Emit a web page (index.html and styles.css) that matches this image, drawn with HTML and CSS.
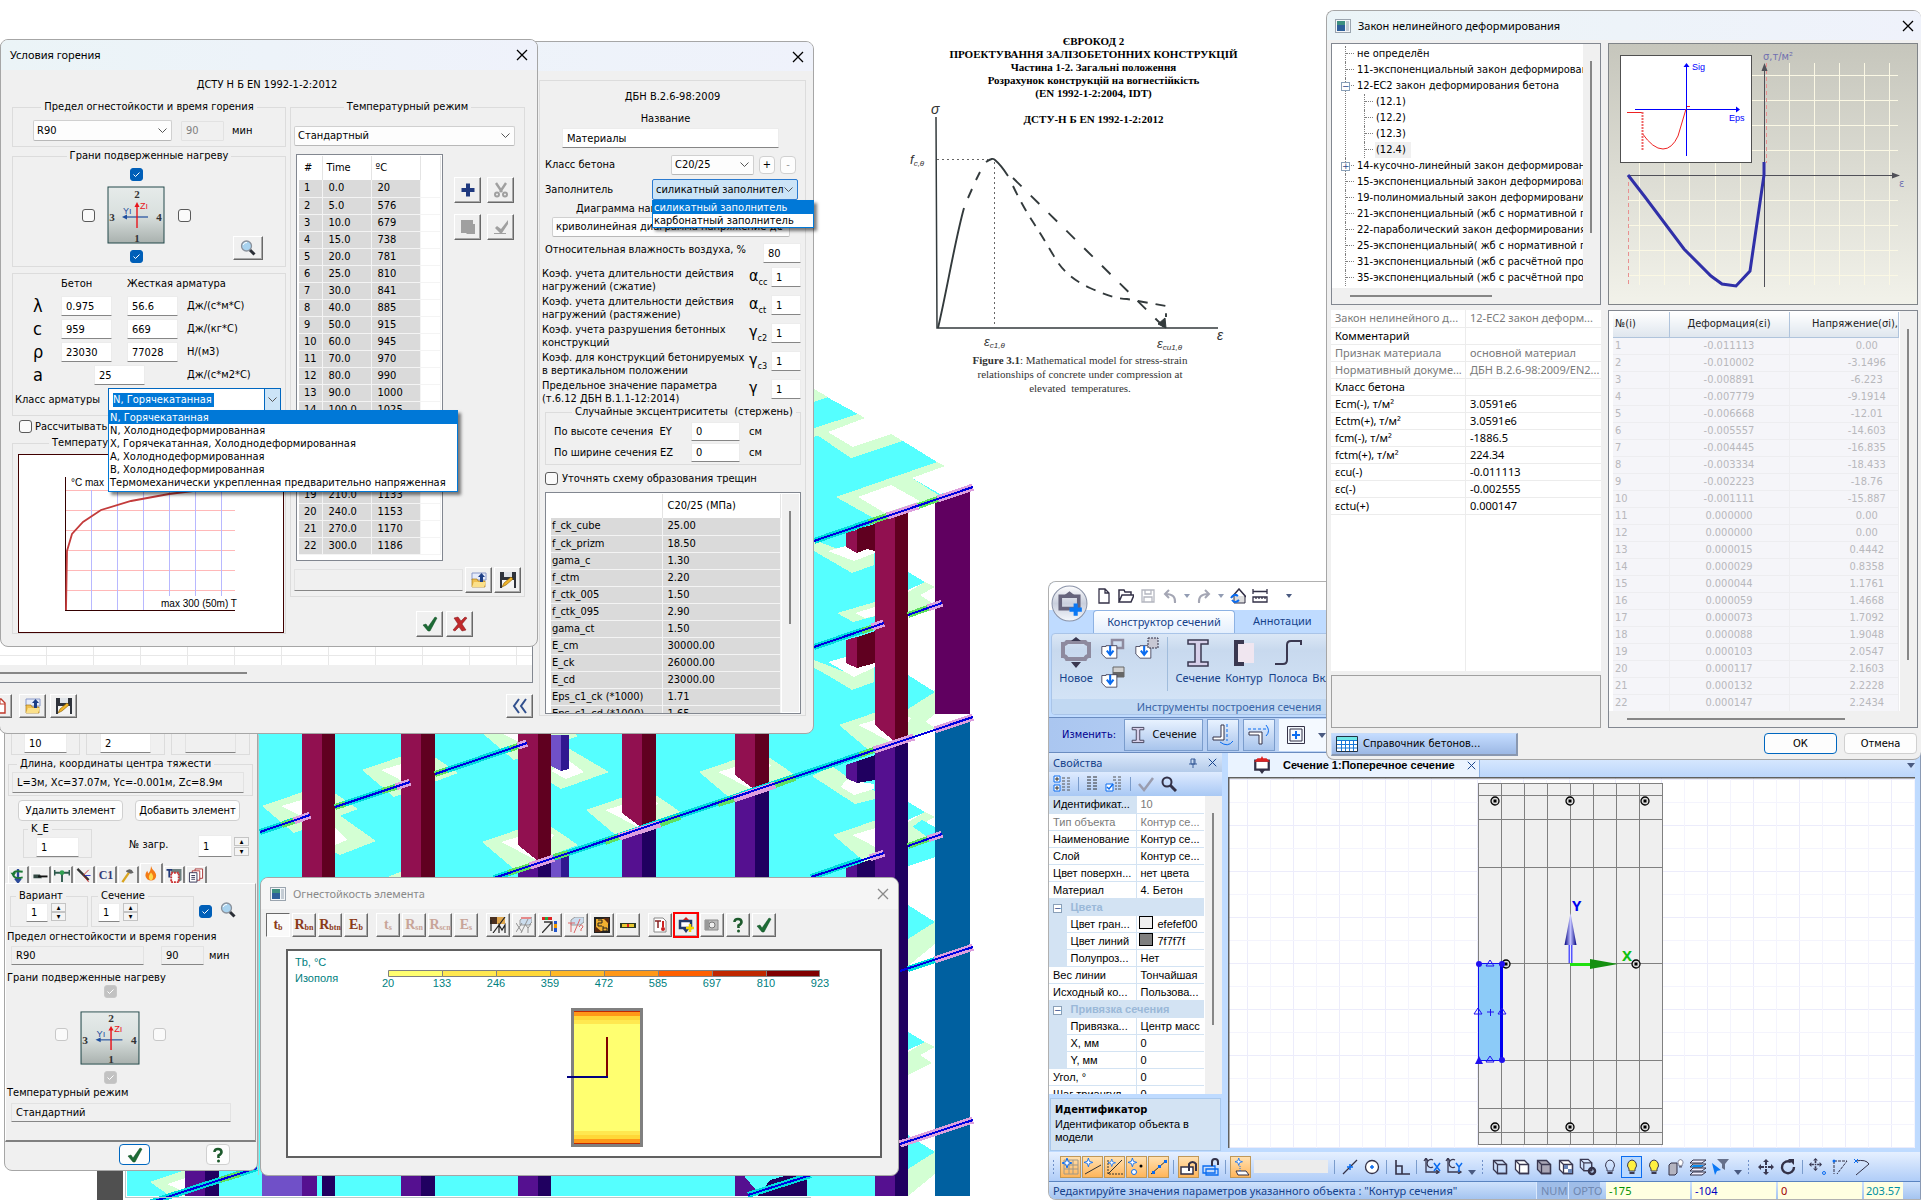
FILE: index.html
```
<!DOCTYPE html>
<html lang="ru">
<head>
<meta charset="utf-8">
<title>Огнестойкость элемента</title>
<link rel="stylesheet" href="styles.css">
</head>
<body>
<svg class="sprite" aria-hidden="true">
<defs>
<linearGradient id="g-face" x1="0" y1="0" x2="0" y2="1"><stop offset="0" stop-color="#e6ebea"/><stop offset=".5" stop-color="#d9e0de"/><stop offset="1" stop-color="#a9b1ae"/></linearGradient>
<linearGradient id="g-plot" x1="0" y1="0" x2="0" y2="1"><stop offset="0" stop-color="#c6c6bc"/><stop offset="1" stop-color="#f2f2ea"/></linearGradient>
<linearGradient id="g-blue" x1="0" x2="1"><stop offset="0" stop-color="#000080"/><stop offset=".5" stop-color="#c0c0ff"/><stop offset="1" stop-color="#000080"/></linearGradient>
<linearGradient id="g-app" x1="0" y1="0" x2="0" y2="1"><stop offset="0" stop-color="#fdfdfe"/><stop offset=".5" stop-color="#c9cfdd"/><stop offset="1" stop-color="#f4f7fc"/></linearGradient>
<pattern id="p-grid" x="1248" y="825" width="46" height="46" patternUnits="userSpaceOnUse"><path d="M.5 0V46M0 .5H46" stroke="#ececfb"/><path d="M23.5 0V46M0 23.5H46" stroke="#f4f4fd"/></pattern>
</defs>
<symbol id="i-close" viewBox="0 0 12 12"><path d="M1 1l10 10M11 1L1 11" fill="none" stroke="currentColor" stroke-width="1.3"/></symbol>
<symbol id="i-app" viewBox="0 0 16 14"><rect x=".5" y=".5" width="15" height="13" fill="#f4f6f8" stroke="#9aa4ae"/><rect x="2" y="2" width="8" height="10" fill="#3c8f80"/><rect x="2" y="6" width="8" height="6" fill="#2d5f9a"/><rect x="11" y="2" width="3" height="10" fill="#c4ccd4"/></symbol>
<symbol id="i-plus" viewBox="0 0 16 16"><path d="M6 1.500h4V6h4.500v4H10v4.500H6V10H1.500V6H6z" fill="#203a80"/></symbol>
<symbol id="i-cut" viewBox="0 0 16 16"><path d="M3 1l6 9M13 1L7 10" stroke="#a0a0a0" stroke-width="2.400"/><g fill="none" stroke="#a0a0a0" stroke-width="2"><circle cx="4" cy="12.500" r="2"/><circle cx="12" cy="12.500" r="2"/></g></symbol>
<symbol id="i-block" viewBox="0 0 16 16"><path d="M1 1h12v4h2v10H7l-1-1H1z" fill="#a0a0a0"/></symbol>
<symbol id="i-tickgray" viewBox="0 0 16 16"><path d="M15 1v4l-6 9H7L2 9l2-2 4 3zM1 14h12v1H1z" fill="#a0a0a0"/></symbol>
<symbol id="i-tick" viewBox="0 0 16 16"><path d="M1 9l3-1 2 3 7-10 2 1-7 13H6z" fill="#1c6b35" stroke="#0d4a20" stroke-width=".5"/></symbol>
<symbol id="i-cross" viewBox="0 0 16 16"><path d="M2 2l4-1 3 4 4-4 2 1-5 6 4 6-4 1-3-4-4 4-2-1 5-6z" fill="#c0292b" stroke="#7c1012" stroke-width=".5"/></symbol>
<symbol id="i-open" viewBox="0 0 16 16"><path d="M1 1h14v7H1z" fill="#e6ecfa" stroke="#8898c8"/><path d="M1 15V7h5l1 2h7v6z" fill="#f0c050" stroke="#a87818" stroke-width=".7"/><path d="M3 10h12l-2 5H1z" fill="#fbe08a"/><path d="M9 10V5H7l3.500-4L14 5h-2v5z" fill="#1d3f87"/></symbol>
<symbol id="i-save" viewBox="0 0 16 16"><path d="M0 0h16v16H0z" fill="#2f333b"/><path d="M4 0h8v5H4z" fill="#dfe3e8"/><path d="M2 8h12v8H2z" fill="#f4f4f4"/><path d="M2 15l2-4 7-6 2 2-7 6z" fill="#f0b429" stroke="#855a00" stroke-width=".6"/></symbol>
<symbol id="i-glass" viewBox="0 0 16 16"><path d="M9.500 9.500l5 5" stroke="#2b2f36" stroke-width="3"/><circle cx="6.500" cy="6" r="5" fill="#a9d3ef" stroke="#8b929c" stroke-width="1.300"/><path d="M3 5q1.500-3 4-2.500" stroke="#fff" fill="none"/></symbol>
<symbol id="i-back" viewBox="0 0 16 16"><path d="M7 1L2 8l5 7M14 1L9 8l5 7" fill="none" stroke="#31508e" stroke-width="2"/></symbol>
<symbol id="i-page" viewBox="0 0 16 16"><path d="M2 1h8l4 4v10H2z" fill="#fff" stroke="#c0392b" stroke-width="1.400"/><path d="M9 1v5h5" fill="none" stroke="#c0392b"/></symbol>
<symbol id="i-help" viewBox="0 0 16 16"><path d="M4.500 5Q4.500 2 8 2t3.500 3Q11.500 7 8.500 8.500V11" fill="none" stroke="#1d5a2c" stroke-width="2.600"/><circle cx="8.500" cy="14" r="1.500" fill="#1d5a2c"/></symbol>
<symbol id="i-face" viewBox="0 0 58 58"><rect x="1" y="1" width="56" height="56" fill="url(#g-face)" stroke="#22494a"/><g font-family="Liberation Serif,serif" font-weight="700" font-size="11" fill="#333" text-anchor="middle"><text x="30" y="12">2</text><text x="5" y="35">3</text><text x="52" y="35">4</text><text x="30" y="56">1</text></g><path d="M41 31H18" stroke="#1f4e9e" stroke-width="1.200"/><path d="M15 31l5-2.500v5z" fill="#1f4e9e"/><path d="M30 42V20" stroke="#e8141c" stroke-width="1.400"/><path d="M30 16l2.500 5h-5z" fill="#e8141c"/><g font-family="Liberation Sans,sans-serif" font-size="9"><text x="16" y="28" fill="#1f4e9e">Yı</text><text x="33" y="23" fill="#e8141c">Zı</text></g></symbol>
<symbol id="i-section" viewBox="0 0 32 32"><path d="M3 7q3 0 4-2h18q1 2 4 2v12q-3 0-4 3H7q-1-3-4-3z" fill="none" stroke="#8e8a9e" stroke-width="4"/><path d="M11 4l5-4 5 4zM11 25l5 6 5-6z" fill="#3a3850"/></symbol>
<symbol id="i-import" viewBox="0 0 24 24"><path d="M1 9h5v-1h13v15H6l-5-5z" fill="#fff" stroke="#3a3850"/><path d="M11 8v9M7 14l4 5 4-5" fill="none" stroke="#0a6cf0" stroke-width="2.500"/></symbol>
<symbol id="i-ibeam" viewBox="0 0 24 30"><path d="M2 2h20v4h-7v18h7v4H2v-4h7V6H2z" fill="#d7d0ea" stroke="#3a3850" stroke-width="1.500"/></symbol>
<symbol id="i-bulb" viewBox="0 0 16 16"><path d="M5 10Q2.500 7 4 4t4-3 4 3-1 6v2H5z" stroke="#3a3850"/><path d="M5.500 13h5v2h-5z" fill="#3a3850"/></symbol>
<symbol id="i-cube" viewBox="0 0 16 16"><path d="M1.500 1.500h9l4 4v9h-9l-4-4z" stroke="#3a3850" stroke-width="1.300"/><path d="M5.500 5.500h9v9h-9zM1.500 1.500l4 4" fill="none" stroke="#3a3850" stroke-width="1.300"/></symbol>
<symbol id="i-star" viewBox="0 0 16 16"><path d="M5 0l1.200 3.800L10 5 6.200 6.200 5 10 3.800 6.200 0 5l3.800-1.200z" fill="#fff" stroke="#0a6cf0"/></symbol>
<symbol id="i-rot" viewBox="0 0 18 16"><path d="M3 0v14h12M1 3l2-3 2 3M13 12l3 2-3 2" fill="none" stroke="#3a3850" stroke-width="1.300"/><path d="M10 2a4 4 0 1 0 0 7" fill="none" stroke="#3a3850" stroke-width="1.300"/></symbol>
<symbol id="i-move" viewBox="0 0 16 16"><path d="M8 0l3 3H5zM8 16l3-3H5zM0 8l3-3v6zM16 8l-3-3v6zM7 7h2v2H7z" fill="#3a3850"/><path d="M8 3v3M8 10v3M3 8h3M10 8h3" stroke="#3a3850" stroke-width="2"/></symbol>
<symbol id="i-node" viewBox="0 0 10 10"><circle cx="5" cy="5" r="4" fill="#ddd" stroke="#000" stroke-width="1.300"/><rect x="3.500" y="3.500" width="3" height="3"/></symbol>
<symbol id="i-hole" viewBox="-70 -50 140 100" overflow="visible"><path d="M-56-19L5-40 40-16-24 8z" fill="#d3ffd3"/><path d="M-37-19L4-31 16-26 0 0z" fill="#fff"/></symbol>
</svg>

<main class="desktop">

<svg class="scene" width="975" height="1200" viewBox="0 0 975 1200" shape-rendering="crispEdges">
<rect x="97" y="1165" width="26" height="35" fill="#505050"/>
<path d="M127 640H814V389L825 396 858 414 937 462 970 480V487L875 522V745L908 735V1196H127z" fill="#5ff"/>
<path d="M814 389l14 8-14 5zM858 414l7 4-37 14 25 15 38-13 12 7-52 17-37-25v-5zM937 462l8 4-33 12 28 18-63 24-41-23z" fill="#d3ffd3"/>
<path d="M865 418l-37 14 25 15 38-13 12 7 34 21 8 4-33 12 28 16 40-10V410zM891 485l-33 12 27 16 35-12z" fill="#fff"/>
<path d="M851 458l52-17 34 21-60 20-41 15-22 8v-70z" fill="#5ff"/>
<path d="M814 430l37 28 52-17-12-7-38 13-25-15-14 5zM937 462l-101 35 41 23 63-24-28-18 33-12z" fill="#d3ffd3"/>
<path d="M891 485l-33 12 27 16 35-12z" fill="#fff"/>
<path d="M814 540l40 15 20-8v18l-22 8-38-22zM814 660l36 14 24-8v16l-22 8-38-23z" fill="#d3ffd3"/>
<path d="M875 602l-38 11 16 9 30-8z" fill="#d3ffd3"/><path d="M875 607l-20 6 10 5 22-4z" fill="#fff"/>
<path d="M828 551l35-10 12 6v6l-21 8zM828 662l35-10 12 6v9l-21 10z" fill="#fff"/>
<g id="edge">
<path d="M908 572l17 10-17 8z" fill="#5ff"/><path d="M925 582l10 5-15 8 12 8-24 12v-23zM915 700l20-10v24l-27 22v-30z" fill="#d3ffd3"/><path d="M908 675l27 17-27 17z" fill="#5ff"/>
</g>
<use href="#edge" y="230"/><use href="#edge" y="460"/>
<path d="M922 820l13 7v30l-27 9v-36z" fill="#5ff"/>
<g>
<use href="#i-hole" x="248" y="775" width="140" height="100"/>
<use href="#i-hole" x="348" y="739" width="140" height="100"/>
<use href="#i-hole" x="468" y="702" width="140" height="100"/>
<use href="#i-hole" x="468" y="811" width="140" height="100"/>
<use href="#i-hole" x="572" y="779" width="140" height="100"/>
<use href="#i-hole" x="685" y="741" width="140" height="100"/>
<use href="#i-hole" x="825" y="694" width="140" height="100"/>
<use href="#i-hole" x="819" y="804" width="140" height="100"/>
</g>
<path d="M568 748l41 24-48 17-34-21 24-33zM335 812l41 29-36 14-37-18zM846 776l29 15v8l-20 5-43-28 20-10zM814 665l35 14 25-8v10l-22 7-38-20zM385 878l15-6 20 6zM150 1182l35-12v26h-15z" fill="#d3ffd3"/>
<path d="M568 760l16 12-18 7-15-8zM335 828l12 12-12 5zM846 780l28 4v5l-20 6-13-8zM167 1184l18-6v14z" fill="#fff"/>
<g fill="#911050"><path d="M302 730h20v150h-20zM401 730h20v150h-20zM518 730h20v131l-20-16zM622 730h20v98l-20-15zM735 730h20v60l-20-15zM875 523l20-7v226l-20-17zM846 533l11-3v23l-11-6zM846 640l11-3v31l-11-5z"/></g>
<g fill="#600020"><path d="M322 730h13v150h-13zM421 730h14v150h-14zM538 730h13v127l-13 5zM642 730h14v93l-14 6zM755 730h14v57l-14 4zM895 516l13-6v228l-13 5zM857 529l18-5v27l-8-2-10 4zM857 637l18-6v32l-18 5z"/></g>
<g fill="#551090"><path d="M518 869l20-7v18h-20zM622 836l20-7v51h-20zM735 797l20-6v89h-20zM875 750l20-7v453h-20zM846 765l11-4v22l-11-5zM846 868l11-4v32h-11zM185 1165h20v31h-20zM262 1165h55v31h-55zM401 1165h20v31h-20zM518 1165h20v31h-20zM735 1165l20 24v7h-20z"/></g>
<g fill="#200060"><path d="M538 862l13-5v23h-13zM642 829l14-5v56h-14zM755 791l14-4v93h-14zM895 743l13-4v457h-13zM857 761l18-6v25l-18 3zM857 864l18-6v22h-18zM205 1165h14v31h-14zM322 1165h13v31h-13zM421 1165h14v31h-14zM538 1165h13v31h-13zM770 1180l37-10v26h-49z"/></g>
<g fill="#7050c8"><path d="M551 735h10v36l-10-5zM551 858h10v22h-10zM262 1165h40v31h-40z"/></g>
<g fill="#301890"><path d="M561 735h8v34l-8 2zM561 855h8v25h-8z"/></g>
<path d="M935 502l35-12v224H935z" fill="#600060"/><path d="M935 731l35-12v477h-35z" fill="#0060a0"/>
<g fill="none" stroke="#00dcdc" stroke-width="6"><path d="M814 541l55-19M814 647l50-17M494 878l401-135M260 832l50-17M335 807l75-25M435 774l92-31M811 877l50-17M127 1210l130-42M748 1195l63-20M908 969l27-9M908 1142l27-9"/></g>
<g fill="none" stroke="#5fe05f" stroke-width="6"><path d="M869 522l18-6M918 506l20-7M862 631l12-4M908 615l20-7M282 825l12-4M335 807l10-3M382 791l14-4M435 774l12-4M510 749l8-3M508 873l22-7M554 857l14-4M605 842l14-5M660 824l20-7M718 804l16-5M775 785l20-7M860 755l14-5M908 846l20-7M220 1180l20-6"/></g>
<g fill="none" stroke="#dda0dd" stroke-width="7"><path d="M887 516l31-10M938 499l35-12M872 627l12-4M928 608l14-5M294 821l16-6M396 787l14-5M518 746l9-3M530 866l24-8M619 837l41-13M734 799l41-14M874 750l40-13M935 730l38-13M870 858l14-5M928 839l14-5M935 960l38-13M900 1144l73-24"/></g>
<g fill="none" stroke="#0000e0" stroke-width="2"><path d="M814 541l159-54M814 647l70-24M908 615l34-12M494 878l479-161M260 832l50-17M335 807l75-25M435 774l92-31M811 877l73-24M908 846l34-12M900 971l73-24M900 1144l73-24M748 1195l63-20M127 1210l130-42"/></g>
<path d="M258 735v440M125.500 1170v27H811" fill="none" stroke="#b8c8c8"/>
</svg>

<article class="doc">
<p class="doc-head">ЄВРОКОД 2<br>ПРОЕКТУВАННЯ ЗАЛІЗОБЕТОННИХ КОНСТРУКЦІЙ<br>Частина 1-2. Загальні положення<br>Розрахунок конструкцій на вогнестійкість<br>(EN 1992-1-2:2004, IDT)<br><br>ДСТУ-Н Б EN 1992-1-2:2012</p>
<figure>
<svg width="340" height="254" viewBox="0 0 340 254" fill="none" stroke="#333a3c">
<path d="M46 17L47 228H328" stroke-width="1.500"/>
<path d="M47 59.500H98M104.500 62V228" stroke-dasharray="2 3" stroke="#666"/>
<path d="M48 228C57 190 65 140 74 108M78 98l4-9M86 80l4-8M96 62q7-5 9-2 6 5 13 16" stroke-width="1.900"/>
<path d="M123 78L275 228" stroke-dasharray="12 13" stroke-width="1.900"/>
<path d="M123 86Q132 105 143 122T165 158 200 188 237 199L276 206V217" stroke-dasharray="10 8" stroke-width="1.900"/>
<path d="M276 228l-8-4 7-6z" fill="#333a3c"/>
<g fill="#333" stroke="none" font-family="Liberation Sans,sans-serif" font-style="italic"><text x="41" y="14" font-size="14">σ</text><text x="20" y="64" font-size="13">f<tspan font-size="8" dy="2">c,θ</tspan></text><text x="94" y="246" font-size="13">ε<tspan font-size="8" dy="2">c1,θ</tspan></text><text x="267" y="248" font-size="13">ε<tspan font-size="8" dy="2">cu1,θ</tspan></text><text x="327" y="240" font-size="14">ε</text></g>
</svg>
<figcaption><b>Figure 3.1</b>: Mathematical model for stress-strain<br>relationships of concrete under compression at<br>elevated&nbsp; temperatures.</figcaption>
</figure>
</article>

<section class="win panel">
<div class="row top-fields">
<div class="frame"><input class="in w43" value="10" aria-label="A"></div><div class="frame f2"><input class="in w51" value="2" aria-label="B"></div><div class="frame f3"><input class="in ro w51" readonly value="" aria-label="C"></div>
</div>
<fieldset class="group len"><legend>Длина, координаты центра тяжести</legend><input class="in ro" readonly value="L=3м, Xc=37.07м, Yc=-0.001м, Zc=8.9м" aria-label="Длина"></fieldset>
<div class="row two"><button class="soft">Удалить элемент</button><button class="soft">Добавить элемент</button></div>
<div class="row ke"><fieldset class="group"><legend>K_E</legend><input class="in w43" value="1" aria-label="K_E"></fieldset><label for="zagr">№ загр.</label><input id="zagr" class="in" value="1"><span class="spin"><button>▴</button><button>▾</button></span></div>
<div class="tabs">
<button><svg viewBox="0 0 16 16"><path d="M8 1v14M5 11l3 4 3-4" stroke="#2b4a9a" stroke-width="2.500" fill="none"/><path d="M13 4Q3 2 3 7t10 3" stroke="#1c7a35" stroke-width="2" fill="none"/><path d="M0 5l6 0-3 4z" fill="#1c7a35"/></svg></button>
<button><svg viewBox="0 0 16 16"><path d="M1 7h7l2 4H1z" fill="#334a44"/><path d="M6 9h10" stroke="#111" stroke-width="2"/></svg></button>
<button><svg viewBox="0 0 16 16"><path d="M0 5h16M8 5v10M0 2v6M16 2v6" stroke="#2d5a4c" stroke-width="2"/><circle cx="8" cy="5" r="2.500" fill="#30a050"/></svg></button>
<button><svg viewBox="0 0 16 16"><path d="M1 1l12 12" stroke="#333" stroke-width="2.500"/><path d="M7 8l6-6M8 9l5 6" stroke="#c33"/><path d="M9 8h6" stroke="#33c"/></svg></button>
<button class="sec">C1</button>
<button><svg viewBox="0 0 16 16"><path d="M2 15L9 5" stroke="#d9a520" stroke-width="2.500"/><path d="M6 3q5-4 8 2l-3 1-5-2z" fill="#666"/></svg></button>
<button class="on"><svg viewBox="0 0 16 16"><path d="M8 0q1 4 4 6 3 4 0 8-4 3-8 0-4-4 0-9l1 3q3-3 3-8z" fill="#f47b16"/><path d="M8 7q4 4 1 8H7q-3-3 1-8z" fill="#ffd84a"/></svg></button>
<button><svg viewBox="0 0 16 16"><path d="M5 1h11v12l-3 2H5z" fill="#6c8080"/><path d="M5 5h8v10H5z" fill="#fff" stroke="#c33" stroke-width="2" stroke-dasharray="2 1"/><path d="M0 2h6M3 2v8" stroke="#223a7a" stroke-width="2"/></svg></button>
<button><svg viewBox="0 0 16 16" fill="#fff"><path d="M7 1h8v10H7z" stroke="#a33"/><path d="M4 3h8v10H4z" stroke="#a33"/><path d="M1 5h8v10H1zM3 8h4M3 10h4M3 12h4" stroke="#335"/></svg></button>
</div>
<div class="page">
<div class="row var"><fieldset class="group"><legend>Вариант</legend><div class="row"><input class="in" value="1" aria-label="Вариант"><span class="spin"><button>▴</button><button>▾</button></span></div></fieldset>
<fieldset class="group wide"><legend>Сечение</legend><div class="row"><input class="in" value="1" aria-label="Сечение"><span class="spin"><button>▴</button><button>▾</button></span></div></fieldset>
<input type="checkbox" checked class="cb" aria-label="Включить"><svg class="s16"><use href="#i-glass"/></svg></div>
<label class="lbl l1" for="r90">Предел огнестойкости и время горения</label>
<div class="row lim"><input id="r90" class="in ro" readonly value="R90"><input class="in ro w43" readonly value="90" aria-label="мин"><span>мин</span></div>
<div class="lbl l2">Грани подверженные нагреву</div>
<div class="faces dim"><input type="checkbox" class="cb n" checked disabled aria-label="2"><input type="checkbox" class="cb w" disabled aria-label="3"><svg preserveAspectRatio="none" viewBox="0 0 58 58"><use href="#i-face"/></svg><input type="checkbox" class="cb e" disabled aria-label="4"><input type="checkbox" class="cb s" checked disabled aria-label="1"></div>
<label class="lbl l3" for="tmode">Температурный режим</label>
<input id="tmode" class="in ro std" readonly value="Стандартний">
</div>
<div class="row foot"><button class="soft focus"><svg class="s16"><use href="#i-tick"/></svg></button><button class="soft"><svg class="s16"><use href="#i-help"/></svg></button></div>
</section>

<section class="win mats">
<header class="bar"><button class="x" aria-label="Закрыть"><svg><use href="#i-close"/></svg></button></header>
<div class="mats-body">
<div class="under"><div class="cells"></div><div class="row ubtns"><button class="b3"><svg class="s16"><use href="#i-page"/></svg></button><button class="b3"><svg class="s16"><use href="#i-open"/></svg></button><button class="b3"><svg class="s16"><use href="#i-save"/></svg></button><button class="b3 last"><svg class="s16"><use href="#i-back"/></svg></button></div></div>
<div class="mframe">
<p class="ctr h1">ДБН В.2.6-98:2009</p>
<label class="ctr h2" for="mname">Название</label>
<input id="mname" class="in mname" value="Материалы">
<div class="row cls"><label for="cls">Класс бетона</label><select id="cls"><option>C20/25</option></select><button class="soft sm">+</button><button class="soft sm off" disabled>-</button></div>
<div class="row fil"><label for="fil">Заполнитель</label><div class="pop"><select id="fil" class="act"><option>силикатный заполнител</option></select><ul class="list"><li class="sel">силикатный заполнитель</li><li>карбонатный заполнитель</li></ul></div></div>
<label class="diag" for="diag">Диаграмма нап</label>
<select id="diag" class="diagsel"><option>криволинейная диаграмма напряжение-де</option></select>
<div class="row hum"><label for="hum">Относительная влажность воздуха, %</label><input id="hum" class="in" value="80"></div>
<div class="coefs">
<label for="k1">Коэф. учета длительности действия<br>нагружений (сжатие)</label><i>α<sub>cc</sub></i><input id="k1" class="in" value="1">
<label for="k2">Коэф. учета длительности действия<br>нагружений (растяжение)</label><i>α<sub>ct</sub></i><input id="k2" class="in" value="1">
<label for="k3">Коэф. учета разрушения бетонных<br>конструкций</label><i>γ<sub>c2</sub></i><input id="k3" class="in" value="1">
<label for="k4">Коэф. для конструкций бетонируемых<br>в вертикальном положении</label><i>γ<sub>c3</sub></i><input id="k4" class="in" value="1">
<label for="k5">Предельное значение параметра<br>(т.6.12 ДБН В.1.1-12:2014)</label><i>γ</i><input id="k5" class="in" value="1">
</div>
<fieldset class="group ecc"><legend>Случайные эксцентриситеты&nbsp; (стержень)</legend>
<div class="row"><label for="ey">По высоте сечения&nbsp; EY</label><input id="ey" class="in" value="0"><span>см</span></div>
<div class="row"><label for="ez">По ширине сечения EZ</label><input id="ez" class="in" value="0"><span>см</span></div></fieldset>
<label class="row crack"><input type="checkbox" class="cb">Уточнять схему образования трещин</label>
<div class="box mtab"><table>
<tr><th></th><th>C20/25 (МПа)</th></tr>
<tr><td>f_ck_cube<td>25.00<tr><td>f_ck_prizm<td>18.50<tr><td>gama_c<td>1.30<tr><td>f_ctm<td>2.20<tr><td>f_ctk_005<td>1.50<tr><td>f_ctk_095<td>2.90<tr><td>gama_ct<td>1.50<tr><td>E_cm<td>30000.00<tr><td>E_ck<td>26000.00<tr><td>E_cd<td>23000.00<tr><td>Eps_c1_ck (*1000)<td>1.71<tr><td>Eps_c1_cd (*1000)<td>1.65
</table><div class="vs"><span class="thumb t1"></span></div></div>
</div>
</div>
</section>

<section class="win fire">
<header class="bar"><h2>Условия горения</h2><button class="x" aria-label="Закрыть"><svg><use href="#i-close"/></svg></button></header>
<p class="norm">ДСТУ Н Б EN 1992-1-2:2012</p>
<div class="cols">
<div class="lc">
<fieldset class="group limit"><legend class="mid">Предел огнестойкости и время горения</legend><div class="row"><select aria-label="Предел"><option>R90</option></select><input class="in" disabled value="90" id="mins"><label for="mins">мин</label></div></fieldset>
<fieldset class="group facegrp"><legend class="mid">Грани подверженные нагреву</legend><div class="row">
<div class="faces"><input type="checkbox" class="cb n" checked aria-label="2"><input type="checkbox" class="cb w" aria-label="3"><svg><use href="#i-face"/></svg><input type="checkbox" class="cb e" aria-label="4"><input type="checkbox" class="cb s" checked aria-label="1"></div>
<button class="b3 look"><svg class="s16"><use href="#i-glass"/></svg></button></div></fieldset>
<div class="frame therm">
<div class="tg"><span></span><span class="th">Бетон</span><span class="th">Жесткая арматура</span><span></span>
<i>λ</i><input class="in" value="0.975" aria-label="λ бетон"><input class="in" value="56.6" aria-label="λ арматура"><span>Дж/(с*м*С)</span>
<i>c</i><input class="in" value="959" aria-label="c бетон"><input class="in" value="669" aria-label="c арматура"><span>Дж/(кг*С)</span>
<i>ρ</i><input class="in" value="23030" aria-label="ρ бетон"><input class="in" value="77028" aria-label="ρ арматура"><span>Н/(м3)</span>
<i>a</i><input class="in one" value="25" aria-label="a"><span>Дж/(с*м2*С)</span></div>
<div class="row arm"><label for="arm">Класс арматуры</label><div class="pop combo"><input id="arm" value="N, Горячекатанная"><button aria-label="Открыть"></button><ul class="list"><li class="sel">N, Горячекатанная</li><li>N, Холоднодеформированная</li><li>X, Горячекатанная, Холоднодеформированная</li><li>A, Холоднодеформированная</li><li>B, Холоднодеформированная</li><li>Термомеханически укрепленная предварительно напряженная</li></ul></div></div>
</div>
<label class="row calc"><input type="checkbox" class="cb">Рассчитывать</label>
<fieldset class="group chart"><legend>Температур</legend>
<svg width="266" height="179" viewBox="0 0 266 179" shape-rendering="crispEdges" fill="none"><rect x=".5" y=".5" width="265" height="178" fill="#fff" stroke="#400000"/><path d="M47 36.500H217M47 56.500H217M47 76.500H217M47 96.500H217M47 116.500H217M47 136.500H217" stroke="#ffb8b8"/><path d="M73.500 36V156M99.500 36V156M125.500 36V156M151.500 36V142M177.500 36V142M203.500 36V142" stroke="#b8b8ff"/><path d="M47.500 23V156.500H217" stroke="#300"/><path d="M48 156L49 97 54 80 65 68 83 56 113 47 151 40 175 37 205 35" stroke="#c33b3b" stroke-width="1.800" shape-rendering="auto"/><g font-family="Liberation Sans,sans-serif" font-size="10" fill="#000"><text x="53" y="32">°C max</text><text x="143" y="153">max 300 (50m) T</text></g></svg></fieldset>
</div>
<div class="rc">
<fieldset class="group regime"><legend class="mid">Температурный режим</legend>
<select aria-label="Режим"><option>Стандартный</option></select>
<div class="row rt"><div class="box ttab"><table>
<tr><th>#</th><th>Time</th><th>ºC</th><th></th></tr>
<tr><td>1<td>0.0<td>20<td><tr><td>2<td>5.0<td>576<td><tr><td>3<td>10.0<td>679<td><tr><td>4<td>15.0<td>738<td><tr><td>5<td>20.0<td>781<td><tr><td>6<td>25.0<td>810<td><tr><td>7<td>30.0<td>841<td><tr><td>8<td>40.0<td>885<td><tr><td>9<td>50.0<td>915<td><tr><td>10<td>60.0<td>945<td><tr><td>11<td>70.0<td>970<td><tr><td>12<td>80.0<td>990<td><tr><td>13<td>90.0<td>1000<td><tr><td>14<td>100.0<td>1025<td><tr><td>15<td>120.0<td>1049<td><tr><td>16<td>140.0<td>1072<td><tr><td>17<td>160.0<td>1092<td><tr><td>18<td>180.0<td>1110<td><tr><td>19<td>210.0<td>1133<td><tr><td>20<td>240.0<td>1153<td><tr><td>21<td>270.0<td>1170<td><tr><td>22<td>300.0<td>1186<td>
</table></div>
<div class="quad"><button class="b3"><svg class="s16"><use href="#i-plus"/></svg></button><button class="b3"><svg class="s16"><use href="#i-cut"/></svg></button><button class="b3"><svg class="s16"><use href="#i-block"/></svg></button><button class="b3"><svg class="s16"><use href="#i-tickgray"/></svg></button></div></div>
<div class="row path"><input class="in ro" readonly aria-label="Файл"><button class="b3"><svg class="s16"><use href="#i-open"/></svg></button><button class="b3"><svg class="s16"><use href="#i-save"/></svg></button></div>
</fieldset>
<div class="row okc"><button class="b3"><svg class="s16"><use href="#i-tick"/></svg></button><button class="b3"><svg class="s16"><use href="#i-cross"/></svg></button></div>
</div>
</div>
</section>

<section class="win resist">
<header class="bar"><svg class="appi"><use href="#i-app"/></svg><h2>Огнестойкость элемента</h2><button class="x" aria-label="Закрыть"><svg><use href="#i-close"/></svg></button></header>
<div class="rtools">
<button class="b3 down">t<sub>b</sub></button><button class="b3">R<sub>bn</sub></button><button class="b3">R<sub>btn</sub></button><button class="b3">E<sub>b</sub></button><hr>
<button class="b3 off" disabled>t<sub>s</sub></button><button class="b3 off" disabled>R<sub>sn</sub></button><button class="b3 off" disabled>R<sub>scn</sub></button><button class="b3 off" disabled>E<sub>s</sub></button><hr>
<button class="b3"><svg class="s16" viewBox="0 0 16 16"><path d="M0 0h7v7H0z" fill="#4a3020"/><path d="M7 0h8v7H7z" fill="#e0a850"/><path d="M1 3v11M15 0L3 16M9 16V8l3 5 3-5v8" stroke="#222" fill="none" stroke-width="1.200"/></svg></button>
<button class="b3"><svg class="s16" viewBox="0 0 16 16"><path d="M4 3l4-3h8v5l-3 3H4z" fill="#cde" stroke="#999"/><path d="M5 1h10" stroke="#e58a8a" stroke-width="2"/><path d="M0 6l6 9M6 6l-6 9M12 2L5 16M9 7l3 4 3-4M12 11v5" stroke="#909090" fill="none"/></svg></button>
<button class="b3"><svg class="s16" viewBox="0 0 16 16"><path d="M0 0h10v3H0z" fill="#d22"/><path d="M3 0h3v3H3z" fill="#2a4"/><path d="M12 4h3v11h-3z" fill="#25c"/><path d="M12 7h3v4h-3z" fill="#e90"/><path d="M2 5h8v9M10 5L0 16" stroke="#333" fill="none" stroke-width="1.300"/></svg></button>
<button class="b3"><svg class="s16" viewBox="0 0 16 16"><path d="M3 3l4-3h9v5l-4 3H3z" fill="#cde" stroke="#999"/><path d="M0 6h7M3 6v9M12 2L6 16" stroke="#d66" fill="none"/><path d="M11 10q3-4 4 0l-2 2v2" stroke="#d66" fill="none"/></svg></button>
<button class="b3"><svg class="s16" viewBox="0 0 16 16"><path d="M1 1h14v14H1z" fill="#f0b030" stroke="#222" stroke-width="2"/><path d="M9 1h6v6zM1 9l7 6H1z" fill="#5a2a10"/><path d="M4 3h4v3H4v3h4M9 9v5h4v-3H9" stroke="#222" fill="none"/></svg></button>
<button class="b3"><svg class="s16" viewBox="0 0 16 16"><path d="M0 6h16v5H0z" fill="#2d3a20"/><path d="M2 7h12v3H2z" fill="#e8c830"/><path d="M7 7h2v3H7z" fill="#d22"/></svg></button><hr>
<button class="b3"><svg class="s16" viewBox="0 0 16 16"><path d="M2 1h9l3 3v11H2z" fill="#fff" stroke="#888"/><path d="M3 4h6M6 4v7" stroke="#822" stroke-width="1.500"/><path d="M11 4v6" stroke="#c22" stroke-width="2"/><circle cx="11" cy="12" r="2" fill="#c22"/></svg></button>
<button class="b3 red"><svg class="s16" viewBox="0 0 16 16"><path d="M2 4h11v7H2z" fill="#fff" stroke="#223a6a" stroke-width="2.500"/><path d="M5 3l3-3 3 3z" fill="#c22"/><path d="M5 12l3 4 3-4z" fill="#223a6a"/><path d="M12 7v8M8 11h8" stroke="#f5d800" stroke-width="2.500"/></svg></button>
<button class="b3"><svg class="s16" viewBox="0 0 16 16"><path d="M1 3h13v10H1z" fill="#bbb" stroke="#888"/><circle cx="8" cy="8" r="3" fill="#eee" stroke="#777"/><path d="M1 3h4v10H1z" fill="#999"/></svg></button>
<button class="b3"><svg class="s16"><use href="#i-help"/></svg></button><button class="b3"><svg class="s16"><use href="#i-tick"/></svg></button>
</div>
<svg class="iso" viewBox="286 949 596 209" font-family="Liberation Sans,sans-serif" font-size="11" fill="#008080">
<rect x="287" y="950" width="594" height="207" fill="#fff" stroke="#606060" stroke-width="2"/>
<text x="295" y="966">Tb, °C</text><text x="295" y="982">Изополя</text>
<g stroke="#808080"><path d="M388.500 970.500h54v6h-54z" fill="#ffff70"/><path d="M442.500 970.500h54v6h-54z" fill="#ffe850"/><path d="M496.500 970.500h54v6h-54z" fill="#ffd838"/><path d="M550.500 970.500h54v6h-54z" fill="#ffb828"/><path d="M604.500 970.500h54v6h-54z" fill="#ff9818"/><path d="M658.500 970.500h54v6h-54z" fill="#ff6000"/><path d="M712.500 970.500h54v6h-54z" fill="#c02800"/><path d="M766.500 970.500h53v6h-53z" fill="#800000"/></g>
<g text-anchor="middle"><text x="388" y="987">20</text><text x="442" y="987">133</text><text x="496" y="987">246</text><text x="550" y="987">359</text><text x="604" y="987">472</text><text x="658" y="987">585</text><text x="712" y="987">697</text><text x="766" y="987">810</text><text x="820" y="987">923</text></g>
<rect x="572.500" y="1009.500" width="69" height="136" fill="#ffff70" stroke="#808080" stroke-width="3"/>
<path d="M574 1011h66v1h-66zM574 1143h66v1h-66z" fill="#c02800"/><path d="M574 1012h66v4h-66zM574 1139h66v4h-66z" fill="#ff9818"/><path d="M574 1016h66v4h-66zM574 1135h66v4h-66z" fill="#ffd838"/><path d="M574 1020h66v4h-66zM574 1131h66v4h-66z" fill="#ffe850"/>
<path d="M607 1037v40" stroke="#800000" stroke-width="2"/><path d="M567 1077h41" stroke="#000080" stroke-width="2"/>
</svg>
</section>

<section class="editor">
<svg class="orb" viewBox="0 0 36 36"><circle cx="18" cy="18" r="17" fill="url(#g-app)" stroke="#8a93a8"/><path d="M9 11h18v12H9z" fill="none" stroke="#66647c" stroke-width="3.500"/><path d="M13 10l5-4 5 4z" fill="#66647c"/><path d="M24 18v12M18 24h12" stroke="#0a78f5" stroke-width="4"/></svg>
<div class="qat">
<svg viewBox="0 0 16 16" fill="#fff" stroke="#333147" stroke-width="1.300"><path d="M3 1h6l4 4v10H3zM9 1v4h4"/></svg>
<svg viewBox="0 0 16 16" fill="none" stroke="#333147" stroke-width="1.500"><path d="M1 14V2h5l1 2h6v3M1 14l3-7h12l-3 7z"/></svg>
<svg viewBox="0 0 16 16" fill="none" stroke="#b4b6c0" stroke-width="1.300"><path d="M2 2h12v12H2zM5 2v4h6V2M4 14V9h8v5"/></svg>
<svg viewBox="0 0 16 16" fill="none" stroke="#a4a6b4" stroke-width="2"><path d="M13 15Q14 6 4 6M7 2L3 6l4 4"/></svg><span class="dn"></span>
<svg viewBox="0 0 16 16" fill="none" stroke="#a4a6b4" stroke-width="2"><path d="M3 15Q2 6 12 6M9 2l4 4-4 4"/></svg><span class="dn"></span>
<svg viewBox="0 0 16 16"><path d="M4 8v7h11V8" fill="#ddd" stroke="#333147"/><path d="M2 9l7-8 7 8" fill="none" stroke="#333147" stroke-width="1.500"/><path d="M1 10q3-5 7-2M9 12q-4 4-7 0" fill="none" stroke="#0a6cf0" stroke-width="2"/></svg>
<svg viewBox="0 0 16 16" fill="none" stroke="#333147" stroke-width="1.300"><path d="M1 1v5M15 1v5M1 3.500h14M1 9h14v5H1zM4 9v2M7 9v2M10 9v2M13 9v2"/></svg>
<span class="dn big"></span>
</div>
<div class="rtabs"><a href="#ribbon" class="cur">Конструктор сечений</a><a href="#ribbon">Аннотации</a></div>
<div class="ribbon" id="ribbon">
<div class="rin">
<button class="rb"><svg width="32" height="32"><use href="#i-section"/></svg>Новое</button>
<div class="imp"><svg viewBox="0 0 24 24"><path d="M11 3h11v8H11z" fill="none" stroke="#8e8a9e" stroke-width="2.500"/><use href="#i-import" width="20" height="24"/></svg><svg viewBox="0 0 24 24"><use href="#i-import" width="20" height="24"/><path d="M13 1h10v10H13z" fill="#c8c8d4" stroke="#333147" stroke-dasharray="2 1"/></svg><svg viewBox="0 0 24 24"><path d="M12 1h11v10H12z" fill="#d0d0d0" stroke="#666"/><path d="M12 6h11v5H12z" fill="#666"/><use href="#i-import" width="20" height="24"/></svg></div>
<hr>
<button class="rb"><svg width="24" height="30"><use href="#i-ibeam"/></svg>Сечение</button>
<button class="rb kon"><svg width="24" height="30" viewBox="0 0 24 30"><path d="M6 5h16v20H6z" fill="#f0e6f0"/><path d="M12 4H4v22h8" fill="none" stroke="#3a3850" stroke-width="4"/></svg>Контур</button>
<button class="rb pol"><svg width="28" height="30" viewBox="0 0 28 30"><path d="M1 26h8q4 0 4-4V7q0-4 4-4h10v4" fill="none" stroke="#3a3850" stroke-width="2"/></svg>Полоса</button>
<button class="rb cutoff">Вкл</button>
</div>
<div class="rlab">Инструменты построения сечения</div>
</div>
<div class="ebar"><span>Изменить:</span><button class="eb"><svg width="14" height="20"><use href="#i-ibeam"/></svg>Сечение</button><button class="eb sq"><svg width="22" height="22" viewBox="0 0 22 22"><path d="M9 1v12H1v3h11V1z" fill="#fff" stroke="#333147"/><path d="M15 0v17" stroke="#0a6cf0" stroke-dasharray="3 2"/><path d="M8 18q8 6 13-1" fill="none" stroke="#0a6cf0"/></svg></button><button class="eb sq"><svg width="22" height="22" viewBox="0 0 22 22"><path d="M1 8h13v12h-3v-9H1z" fill="#fff" stroke="#333147"/><path d="M0 5h18" stroke="#0a6cf0" stroke-dasharray="3 2"/><path d="M18 1q5 6 0 11" fill="none" stroke="#0a6cf0"/></svg></button><div class="ebx"><svg width="18" height="18" viewBox="0 0 18 18"><path d="M.5.500h17v17H.5zM3 3h12v12H3z" fill="none" stroke="#333147"/><path d="M9 5v8M5 9h8" stroke="#0a6cf0" stroke-width="2"/></svg><span class="dn mid2"></span></div></div>
<div class="ebody">
<aside class="props">
<h3>Свойства<span><svg width="10" height="10" viewBox="0 0 10 10"><path d="M3 1h4v5H3zM6 1v5M1 6h8M5 6v4" fill="none" stroke="#3a5e9a"/></svg><svg width="9" height="9"><use href="#i-close" width="9" height="9"/></svg></span></h3>
<div class="ptools"><svg width="18" height="18" viewBox="0 0 18 18"><path d="M1 1h6v6H1zM1 10h6v6H1z" fill="#fff" stroke="#0a6cf0"/><path d="M4 2v4M2 4h4M4 11v4M2 13h4" stroke="#333"/><path d="M9 3h3M14 3h3M9 6h3M14 6h3M9 9h3M14 9h3M9 12h3M14 12h3M9 15h3M14 15h3" stroke="#555"/></svg><hr><svg width="12" height="18" viewBox="0 0 12 18"><path d="M1 2h4M7 2h4M1 5h4M7 5h4M1 8h4M7 8h4M1 11h4M7 11h4M1 14h4M7 14h4" stroke="#333"/></svg><svg width="18" height="18" viewBox="0 0 18 18"><path d="M1 9h7v7H1z" fill="#fff" stroke="#0a6cf0"/><path d="M2 12l2 2 4-5" fill="none" stroke="#0a6cf0" stroke-width="1.500"/><path d="M8 2h3M13 2h3M8 5h3M13 5h3M10 8h2M13 8h3M10 11h2M13 11h3M10 14h2M13 14h3" stroke="#555"/></svg><hr><svg width="16" height="16" viewBox="0 0 16 16"><path d="M1 8l5 6L15 2" fill="none" stroke="#9a9cae" stroke-width="2.500"/></svg><svg width="16" height="16" viewBox="0 0 16 16"><circle cx="6" cy="6" r="4.500" fill="none" stroke="#333147" stroke-width="2"/><path d="M9 9l6 6" stroke="#333147" stroke-width="3"/></svg></div>
<div class="pt"><table>
<colgroup><col class="ca"><col class="cb2"><col class="cc"></colgroup>
<tr><td colspan="2">Идентификат...<td class="gr">10
<tr class="gr"><td colspan="2">Тип объекта<td>Контур се...
<tr><td colspan="2">Наименование<td>Контур се...
<tr><td colspan="2">Слой<td>Контур се...
<tr><td colspan="2">Цвет поверхн...<td>нет цвета
<tr><td colspan="2">Материал<td>4. Бетон
<tr class="cat"><td><span class="tog">−</span><td colspan="2">Цвета
<tr><td class="gut"><td>Цвет гран...<td><span class="sw lt"></span>efefef00
<tr><td class="gut"><td>Цвет линий<td><span class="sw dk"></span>7f7f7f
<tr><td class="gut"><td>Полупроз...<td>Нет
<tr><td colspan="2">Вес линии<td>Тончайшая
<tr><td colspan="2">Исходный ко...<td>Пользова...
<tr class="cat"><td><span class="tog">−</span><td colspan="2">Привязка сечения
<tr><td class="gut"><td>Привязка...<td>Центр масс
<tr><td class="gut"><td>X, мм<td>0
<tr><td class="gut"><td>Y, мм<td>0
<tr><td colspan="2">Угол, °<td>0
<tr><td colspan="2">Шаг триангул...<td>0
</table><div class="vs"><span class="thumb t2"></span></div></div>
<div class="desc"><b>Идентификатор</b>Идентификатор объекта в модели</div>
</aside>
<div class="docarea">
<div class="dtabs"><div class="dtab"><svg width="18" height="18" viewBox="0 0 16 16"><path d="M2 4h12v8H2z" fill="#fff" stroke="#333147" stroke-width="2"/><path d="M1 5l3-3h3l1-2 1 2h3l3 3z" fill="#d22"/><path d="M5 12h6l-3 4z" fill="#333147"/></svg><b>Сечение 1:Поперечное сечение</b><svg width="9" height="9"><use href="#i-close" width="9" height="9"/></svg></div><span class="dn mid2"></span></div>
<svg class="canvas" viewBox="1229 777 687 371" preserveAspectRatio="xMinYMin slice">
<rect x="1229" y="777" width="1400" height="900" fill="#fff"/><rect x="1229" y="777" width="1400" height="900" fill="url(#p-grid)"/>
<g shape-rendering="crispEdges"><path d="M1479.500 783.500h184v361h-184z" fill="#efefef" stroke="#808080"/>
<path d="M1502.500 783v361M1525.500 783v361M1548.500 783v361M1571.500 783v361M1594.500 783v361M1617.500 783v361M1640.500 783v361M1479 795.500h185M1479 819.500h185M1479 867.500h185M1479 963.500h185M1479 1060.500h185M1479 1108.500h185M1479 1132.500h185" stroke="#808080"/></g>
<g><use href="#i-node" x="1491" y="796" width="10" height="10"/><use href="#i-node" x="1566" y="796" width="10" height="10"/><use href="#i-node" x="1641" y="796" width="10" height="10"/><use href="#i-node" x="1491" y="1122" width="10" height="10"/><use href="#i-node" x="1566" y="1122" width="10" height="10"/><use href="#i-node" x="1641" y="1122" width="10" height="10"/><use href="#i-node" x="1502" y="959" width="10" height="10"/><use href="#i-node" x="1632" y="959" width="10" height="10"/></g>
<path d="M1479.500 963.500h23v97h-23z" fill="#8ccbf8" stroke="#1010f0"/><path d="M1502.500 963v97" stroke="#0000f0" stroke-width="3"/>
<g fill="#2010f0"><circle cx="1480" cy="964" r="3"/><circle cx="1503" cy="964" r="3"/><circle cx="1503" cy="1060" r="3"/><path d="M1480 1056l4 8h-8z"/></g>
<path d="M1491 960l4 6h-8zM1491 1056l4 6h-8zM1479 1008l4 6h-8zM1503 1008l4 6h-8zM1488 1012h7M1491.500 1009v7" fill="none" stroke="#2010f0"/>
<path d="M1571.500 963v-20" stroke="#5555ff" stroke-width="4"/><path d="M1571.500 963v-20" stroke="#e8e8ff" stroke-width="1"/><path d="M1571.500 913l6 32h-12z" fill="url(#g-blue)"/>
<path d="M1571 964.500h22" stroke="#20e010" stroke-width="3"/><path d="M1619 964l-28-5v10z" fill="#149010"/>
<g font-family="Noto Sans,sans-serif" font-weight="700" font-size="15"><text x="1573" y="911" fill="#0000f0">Y</text><text x="1623" y="961" fill="#10c010">X</text></g>
<path d="M1229.500 1149V777.500H2600" fill="none" stroke="#606060" stroke-width="2"/>
</svg>
</div>
</div>
<div class="tools">
<span class="grip"></span>
<button class="on"><svg viewBox="0 0 18 18"><path d="M2 2h14v14H2zM2 7h14M2 11h14M7 2v14M11 2v14" fill="none" stroke="#a09888"/><use href="#i-star" width="16" height="16"/></svg></button><button class="on"><svg viewBox="0 0 18 18"><path d="M1 16L17 7" stroke="#333"/><use href="#i-star" width="14" height="14"/></svg></button><button class="on"><svg viewBox="0 0 18 18"><path d="M2 2v14h15" stroke="#333" fill="none" stroke-dasharray="2 1"/><path d="M2 16L16 2" stroke="#333"/><use href="#i-star" x="2" y="1" width="12" height="12"/></svg></button><button class="on"><svg viewBox="0 0 18 18"><circle cx="6" cy="14" r="2.500" fill="#fff" stroke="#0a6cf0"/><circle cx="13" cy="8" r="1.500"/><use href="#i-star" width="14" height="14"/></svg></button><button class="on"><svg viewBox="0 0 18 18"><path d="M1 16L17 2" stroke="#333"/><path d="M2 13h3v3H2zM8 7h3v3H8zM14 2h3v3h-3z" fill="#0a6cf0"/></svg></button><hr>
<button class="on"><svg viewBox="0 0 18 18"><path d="M1 9h12v7H1z" fill="#fff" stroke="#333147" stroke-width="1.500"/><path d="M9 13V6a4 4 0 0 1 7 0v7" fill="none" stroke="#333147" stroke-width="2"/></svg></button><button><svg viewBox="0 0 18 18"><path d="M1 8h12v7H1zM4 11h12v6H4z" fill="none" stroke="#0a6cf0" stroke-width="1.300"/><path d="M10 8V4a3 3 0 0 1 6 0v3" fill="none" stroke="#333147" stroke-width="2"/></svg></button><hr>
<button class="on"><svg viewBox="0 0 18 18"><path d="M4 13h10l3 4H6z" fill="#fff" stroke="#333147"/><path d="M8 8v5" stroke="#0a6cf0" stroke-dasharray="1 1"/><use href="#i-star" x="3" width="12" height="12"/></svg></button><span class="blank"></span><hr>
<button><svg viewBox="0 0 18 18"><path d="M2 16L16 2" stroke="#333147" stroke-width="1.300"/><path d="M6 9h6M9 6v6" stroke="#0a6cf0" stroke-width="1.500"/></svg></button><button><svg viewBox="0 0 18 18"><circle cx="9" cy="9" r="6.500" fill="#fff" stroke="#333147" stroke-width="1.300"/><path d="M7 9h4M9 7v4" stroke="#0a6cf0" stroke-width="1.500"/></svg></button><hr>
<button><svg viewBox="0 0 18 18"><path d="M3 2v14h14M3 8h6v8" fill="none" stroke="#333147" stroke-width="1.600"/></svg></button><hr>
<button><svg viewBox="0 0 18 18"><use href="#i-rot" width="18" height="16"/><path d="M11 5l6 8M17 5l-6 8" stroke="#0a6cf0" stroke-width="1.500"/></svg></button><button><svg viewBox="0 0 18 18"><use href="#i-rot" width="18" height="16"/><path d="M11 5l3 4 3-4M14 9v5" fill="none" stroke="#0a6cf0" stroke-width="1.500"/></svg></button><span class="dn mid2"></span>
<span class="grip"></span>
<button><svg viewBox="0 0 18 18" fill="none"><use href="#i-cube" x="1" y="1" width="16" height="16"/></svg></button><button><svg viewBox="0 0 18 18" fill="#fff"><use href="#i-cube" x="1" y="1" width="16" height="16"/></svg></button><button><svg viewBox="0 0 18 18" fill="#a9a6b6"><use href="#i-cube" x="1" y="1" width="16" height="16"/></svg></button><button><svg viewBox="0 0 18 18" fill="#fff"><use href="#i-cube" x="1" y="1" width="16" height="16"/><path d="M7 7h4v4H7zM11 11h4v4h-4z" fill="#6a86b8"/></svg></button><button><svg viewBox="0 0 18 18" fill="none"><use href="#i-cube" width="14" height="14"/><circle cx="13" cy="13" r="3" stroke="#333147" stroke-width="2.500"/></svg></button><button><svg viewBox="0 0 18 18" fill="none"><use href="#i-bulb" x="1" y="1" width="16" height="16"/></svg></button><button class="hl"><svg viewBox="0 0 18 18" fill="#fff040"><use href="#i-bulb" x="1" y="1" width="16" height="16"/></svg></button><button><svg viewBox="0 0 18 18" fill="#fff040"><use href="#i-bulb" x="1" y="1" width="16" height="16"/></svg></button><button><svg viewBox="0 0 18 18" fill="#fff"><path d="M2 7l2-2h6v10l-2 2H2z" fill="#b4b4c0" stroke="#333147"/><use href="#i-bulb" x="9" width="9" height="11"/></svg></button><button><svg viewBox="0 0 18 18"><path d="M4 2h13l-4 3H1zM4 6h13l-4 3H1zM4 10h13l-4 3H1zM4 14h13l-4 3H1z" fill="#eef" stroke="#333147"/><path d="M4 7h11l-3 2H2z" fill="#0a8cf0"/></svg></button><button><svg viewBox="0 0 18 18"><path d="M6 1h12l-4 5v6l-3-2V6z" fill="#66708a"/><path d="M1 5l9 7-4 1-2 4z" fill="#0a78f5"/></svg></button><span class="dn mid2"></span>
<span class="grip"></span>
<button><svg viewBox="0 0 18 18"><use href="#i-move" x="1" y="1" width="16" height="16"/></svg></button><button><svg viewBox="0 0 18 18"><path d="M15 9a6 6 0 1 1-3-5" fill="none" stroke="#333147" stroke-width="2.400"/><path d="M9 1h6v6z" fill="#333147"/></svg></button><hr>
<button><svg viewBox="0 0 18 18"><use href="#i-move" width="13" height="13"/><circle cx="15" cy="15" r="1.500" fill="none" stroke="#0a6cf0"/></svg></button><button><svg viewBox="0 0 18 18"><path d="M3 3h13L6 16M3 3v13" fill="none" stroke="#333147" stroke-dasharray="3 1"/><circle cx="3" cy="3" r="1.500" fill="#0a6cf0"/></svg></button><button><svg viewBox="0 0 18 18"><path d="M3 3q10-2 13 3L3 17" fill="none" stroke="#333147"/><path d="M1 1l4 4M5 1L1 5" stroke="#0a6cf0"/></svg></button>
</div>
<footer class="status"><span class="msg">Редактируйте значения параметров указанного объекта : "Контур сечения"</span><span class="mode">NUM</span><span class="mode">ОРТО</span><span class="cell c1">-175</span><span class="cell c2">-104</span><span class="cell c3">0</span><span class="cell c4">203.57</span></footer>
</section>

<section class="win law">
<header class="bar"><svg class="appi"><use href="#i-app"/></svg><h2>Закон нелинейного деформирования</h2><button class="x" aria-label="Закрыть"><svg><use href="#i-close"/></svg></button></header>
<div class="lawgrid">
<div class="box treebox"><div class="tv"><ul class="tree"><li>не определён<li>11-экспоненциальный закон деформирования<li class="k"><span class="tog">−</span>12-EC2 закон деформирования бетона<ul><li>(12.1)<li>(12.2)<li>(12.3)<li><span class="cursel">(12.4)</span></ul><li class="k"><span class="tog">+</span>14-кусочно-линейный закон деформирования<li>15-экспоненциальный закон деформирования<li>19-полиномиальный закон деформирования<li>21-экспоненциальный (жб с нормативной прочностью)<li>22-параболический закон деформирования бетона<li>25-экспоненциальный( жб с нормативной прочностью)<li>31-экспоненциальный (жб с расчётной прочностью)<li>35-экспоненциальный (жб с расчётной прочностью)</ul><div class="vs"><span class="thumb t3"></span></div></div><div class="hs"><span class="hthumb h1t"></span></div></div>
<svg class="plot" viewBox="0 0 310 262" fill="none" preserveAspectRatio="none"><rect x=".5" y=".5" width="309" height="261" fill="url(#g-plot)" stroke="#808488"/>
<g stroke="#fbf8e4" shape-rendering="crispEdges"><path d="M31.500 20v222M56.500 20v222M81.500 20v222M107.500 20v222M132.500 20v222M181.500 20v222M206.500 20v222M231.500 20v222M256.500 20v222M281.500 20v222M20 32.500h270M20 57.500h270M20 82.500h270M20 107.500h270M20 157.500h270M20 182.500h270M20 207.500h270M20 232.500h270"/></g>
<path d="M158.500 20v100M20.500 132v112" stroke="#e89090" stroke-dasharray="4 3"/>
<path d="M156.500 22v222M20 132.500h270" stroke="#505058"/><path d="M156.500 20l3 8h-6zM292 132.500l-8 3v-6z" fill="#505058"/>
<rect x="12.500" y="12.500" width="131" height="107" fill="#fff" stroke="#505050"/>
<path d="M78.500 22v91M27 66.500h103" stroke="#00f"/><path d="M78.500 20l3 4h-6zM132 66.500l-4 3v-6z" fill="#00f"/>
<path d="M19 69.500h15M34 90Q45 106 55 106 64 106 70 93L78 66M79 63.500h3" stroke="#e22"/><path d="M34.500 69v39" stroke="#e66" stroke-width="2" stroke-dasharray="2 1"/>
<g font-family="Liberation Sans,sans-serif" font-size="9" fill="#00f"><text x="84" y="27">Sig</text><text x="121" y="78">Eps</text></g>
<path d="M20 132L37 154 76 206 103 233 114 241 128 243 142 228 156 132V119" stroke="#3030a8" stroke-width="3"/>
<g fill="#7070b0" font-family="DejaVu Sans Condensed,sans-serif" font-size="11"><text x="155" y="17">σ,т/м²</text><text x="291" y="144">ε</text></g></svg>
<div class="lleft">
<div class="lp"><table>
<tr class="gr"><td>Закон нелинейного д...<td>12-EC2 закон деформ...
<tr><td>Комментарий<td>
<tr class="gr"><td>Признак материала<td>основной материал
<tr class="gr"><td>Нормативный докуме...<td>ДБН В.2.6-98:2009/EN2...
<tr><td>Класс бетона<td>
<tr><td>Ecm(-), т/м²<td>3.0591e6
<tr><td>Ectm(+), т/м²<td>3.0591e6
<tr><td>fcm(-), т/м²<td>-1886.5
<tr><td>fctm(+), т/м²<td>224.34
<tr><td>εcu(-)<td>-0.011113
<tr><td>εc(-)<td>-0.002555
<tr><td>εctu(+)<td>0.000147
</table></div>
<div class="note"></div>
</div>
<div class="box numbox"><div class="tv"><table>
<tr><th>№(i)<th>Деформация(εi)<th>Напряжение(σi),
<tr><td>1<td>-0.011113<td>0.00<tr><td>2<td>-0.010002<td>-3.1496<tr><td>3<td>-0.008891<td>-6.223<tr><td>4<td>-0.007779<td>-9.1914<tr><td>5<td>-0.006668<td>-12.01<tr><td>6<td>-0.005557<td>-14.603<tr><td>7<td>-0.004445<td>-16.835<tr><td>8<td>-0.003334<td>-18.433<tr><td>9<td>-0.002223<td>-18.76<tr><td>10<td>-0.001111<td>-15.887<tr><td>11<td>0.000000<td>0.00<tr><td>12<td>0.000000<td>0.00<tr><td>13<td>0.000015<td>0.4442<tr><td>14<td>0.000029<td>0.8358<tr><td>15<td>0.000044<td>1.1761<tr><td>16<td>0.000059<td>1.4668<tr><td>17<td>0.000073<td>1.7092<tr><td>18<td>0.000088<td>1.9048<tr><td>19<td>0.000103<td>2.0547<tr><td>20<td>0.000117<td>2.1603<tr><td>21<td>0.000132<td>2.2228<tr><td>22<td>0.000147<td>2.2434
</table><div class="vs"><span class="thumb t4"></span></div></div><div class="hs"><span class="hthumb h2t"></span></div></div>
</div>
<div class="row lawfoot"><button class="ref"><svg width="22" height="16" viewBox="0 0 22 16"><path d="M.5.500h21v15H.5z" fill="#fff" stroke="#234"/><path d="M1 1h20v3H1z" fill="#6fe8e8"/><path d="M1 4.500h20M1 8.500h20M1 12h20M5.500 4v11M9.500 4v11M13.500 4v11M17.500 4v11" stroke="#1878d8"/></svg>Справочник бетонов...</button><button class="soft ok">ОК</button><button class="soft">Отмена</button></div>
</section>
</main>
</body>
</html>
```
FILE: styles.css
```
*{box-sizing:border-box}
body{margin:0;background:#fff;color:#000;font:11px/14px "DejaVu Sans Condensed","DejaVu Sans",sans-serif}
p,h2,h3,ul,figure,hr{margin:0;padding:0}
h2,h3{font-weight:400;font-size:11px}
ul{list-style:none}
button,input,select{font:inherit;color:inherit;margin:0;padding:0}
button{display:flex;align-items:center;justify-content:center}
table{border-collapse:collapse;table-layout:fixed}
td,th{padding:0;font-weight:400;text-align:left;white-space:nowrap;overflow:hidden}
.sprite{position:absolute;width:0;height:0}
.desktop{position:relative;min-height:100vh;overflow:hidden}
.scene{position:absolute;left:0;top:0}
.row{display:flex}
.s16{width:16px;height:16px}

/* windows */
.win{position:absolute;background:#f0f0f0;border:1px solid #a6a6a6;border-radius:8px}
.bar{display:flex;align-items:center;height:30px;padding:0 9px;border-radius:7px 7px 0 0;background:linear-gradient(90deg,#ebf4f7,#eff2fb);font-family:"Noto Sans",sans-serif}
.bar .x{margin-left:auto;border:0;background:none;width:12px;height:12px}
.bar .x svg{width:12px;height:12px}
.appi{width:16px;height:14px;margin-right:7px}

/* controls */
.in{display:block;height:20px;border:1px solid #ececec;border-bottom-color:#868686;background:#fff;padding:0 4px;min-width:0;border-radius:1px}
.in.ro,.in:disabled{background:#f0f0f0;border-color:#e2e2e2;border-bottom-color:#868686}
.in:disabled{color:#808080;border-color:#e2e2e2}
.w43{width:43px}.w51{width:51px}
select{appearance:none;height:20px;border:1px solid #d0d0d0;border-bottom-color:#b8b8b8;border-radius:2px;padding:0 18px 0 3px;background:#fdfdfd url("data:image/svg+xml,%3Csvg xmlns='http://www.w3.org/2000/svg' width='9' height='6'%3E%3Cpath d='M.5.500l4 4 4-4' fill='none' stroke='%23555'/%3E%3C/svg%3E") no-repeat right 4px center}
select.act{background-color:#cce4f7;border-color:#2a7ad0}
.cb{appearance:none;display:block;width:13px;height:13px;border:1px solid #5a5a5a;border-radius:3px;background:#fafafa;flex:none}
.cb:checked{border-color:#005fb8;background:#005fb8 url("data:image/svg+xml,%3Csvg xmlns='http://www.w3.org/2000/svg' width='11' height='11'%3E%3Cpath d='M2.500 5.500l2 2 4-4' fill='none' stroke='%23fff'/%3E%3C/svg%3E") center}
.cb:disabled{border-color:#c8c8c8}
.cb:checked:disabled{background-color:#c2c2c2}
.b3{width:27px;height:26px;background:#f0f0f0;border:1px solid #fff;border-right-color:#696969;border-bottom-color:#696969;box-shadow:inset -1px -1px 0 #a8a8a8}
.soft{background:#fdfdfd;border:1px solid #d0d0d0;border-radius:4px}
.group,.frame{border:1px solid #dcdcdc;margin:0;padding:0;min-width:0}
.group legend{height:14px;padding:0 3px;white-space:nowrap}
.group .mid{margin:0 auto}
.spin{display:grid;width:15px;height:18px}
.spin button{height:9px;font-size:8px;line-height:7px;border:1px solid #c4c4c4;background:#f4f4f4;overflow:hidden}
.box{border:1px solid #828790;background:#fff;display:flex;overflow:hidden}
.pop{position:relative}
.list{position:absolute;z-index:3;background:#fff;border:1px solid #0078d7;box-shadow:3px 3px 3px #00000080;white-space:nowrap}
.list li{height:13px;line-height:13px;padding-left:1px}
.list .sel{background:#0078d7;color:#fff}
.vs{background:#f0f0f0;width:17px;flex:none}
.thumb{display:block;width:2px;margin-left:7px;background:#868686}
.hs{background:#f0f0f0;height:16px}
.hthumb{display:block;height:2px;background:#868686}
.faces{display:grid;grid-template-columns:14px 58px 14px;grid-template-rows:14px 58px 14px;gap:5px 12px;align-items:center;justify-items:center}
.faces svg{width:58px;height:58px;grid-area:2/2}
.faces .n{grid-area:1/2}.faces .w{grid-area:2/1}.faces .e{grid-area:2/3}.faces .s{grid-area:3/2}

/* fire conditions */
.fire{left:0;top:39px;width:538px;height:608px}
.norm{text-align:center;padding:8px 4px 8px 0}
.cols{display:flex;gap:4px;padding:0 12px 0 11px}
.lc{width:275px}
.rc{width:235px}
.limit .row{padding:6px 20px 5px;align-items:center}
.limit select{width:139px;height:21px}
.limit .in{width:43px;margin:0 8px 0 9px}
.facegrp{margin-top:2px}
.facegrp .row{padding:4px 0 3px 68px;align-items:flex-end}
.look{width:30px;height:24px;margin:0 0 3px 42px}
.therm{margin-top:6px;padding:3px 0 4px}
.tg{display:grid;grid-template-columns:28px 66px 60px 1fr;row-gap:3px;padding-left:20px;align-items:center}
.tg .th{margin-bottom:2px;white-space:nowrap}
.tg i{font-style:normal;font-size:18px;line-height:20px}
.tg .in{width:51px}
.tg .one{grid-column:2/4;margin-left:33px}
.arm{align-items:center;padding:3px 2px 0}
.arm label{width:93px}
.combo{display:flex;width:173px;height:23px;border:1px solid #0067c0;background:#fff;align-items:center}
.combo input{width:101px;height:14px;margin-left:4px;border:0;background:#0078d7;color:#fff}
.combo button{margin-left:auto;width:16px;height:21px;border:0;border-left:1px solid #0067c0;background:#cce4f7 url("data:image/svg+xml,%3Csvg xmlns='http://www.w3.org/2000/svg' width='9' height='6'%3E%3Cpath d='M.5.500l4 4 4-4' fill='none' stroke='%23555'/%3E%3C/svg%3E") no-repeat center}
.combo .list{left:-1px;top:21px;width:350px;padding-bottom:2px}
.calc{align-items:center;gap:3px;padding:3px 7px 0;height:18px}
.chart{margin-top:2px;padding:4px 0 0 5px}
.chart legend{margin-left:31px}
.chart svg{display:block}
.regime{padding:12px 3px 3px}
.regime select{width:221px;display:block}
.rt{padding:8px 0 6px 2px;gap:11px}
.ttab{width:147px;height:407px;padding:1px 0 0 2px}
.ttab table{width:142px;height:max-content}
.ttab th{height:24px;border-right:1px solid #e4e4e4;padding-left:4px}
.ttab td{height:17px;line-height:16px;background:#dadada;border-right:1px solid #f4f4f4;border-bottom:1px solid #f4f4f4;padding-left:6px}
.ttab tr>:nth-child(1){width:23px;padding-left:5px}
.ttab tr>:nth-child(2),.ttab tr>:nth-child(3){width:49px}
.ttab td:last-child{background:#fff}
.quad{display:grid;grid-template-columns:27px 27px;grid-auto-rows:26px;gap:11px 6px;align-content:start;padding-top:23px}
.path{gap:2px}
.path .in{width:169px;height:22px;margin-top:2px}
.okc{padding:14px 0 0 126px;gap:3px}

/* materials */
.mats{left:-1px;top:41px;width:815px;height:693px}
.mats .bar{height:29px;padding-right:9px}
.mats-body{display:flex;justify-content:space-between;padding:9px 7px 0 0}
.under{width:533px;padding-top:560px}
.cells{height:43px;border:1px solid #828790;border-width:0 1px 1px 0;background:linear-gradient(#f0f0f0,#f0f0f0) 0 100%/100% 17px no-repeat,linear-gradient(#e8e8e8,#e8e8e8) 0 15px/100% 1px no-repeat,repeating-linear-gradient(90deg,#fff 0 46px,#e8e8e8 46px 47px);position:relative}
.cells::after{content:"";display:block;position:absolute;left:0;bottom:8px;width:247px;height:2px;background:#868686}
.ubtns{padding-top:11px;gap:4px}
.ubtns .b3{height:24px}
.ubtns .b3:first-child{margin:0 3px 0 -15px}
.ubtns .last{margin-left:auto}
.mframe{width:267px;height:636px;border:1px solid #dcdcdc}
.ctr{display:block;text-align:center}
.h1{padding-top:9px}.h2{padding-top:8px;margin-right:14px}
.mname{width:217px;margin:2px 0 0 22px}
.cls{align-items:center;padding:7px 9px 0 5px;gap:5px}
.cls label{margin-right:auto}
.cls select{width:83px}
.sm{width:16px;height:18px}.off{color:#999}
.fil{align-items:center;justify-content:space-between;padding:4px 7px 0 5px}
.fil select{width:146px;height:21px;padding-right:8px}
.fil .list{left:0;top:21px;width:162px;height:28px}
.diag{display:block;padding:2px 0 0 36px}
.diagsel{display:block;width:238px;height:20px;margin:1px 0 0 12px;padding-right:6px}
.hum{padding:6px 4px 0 5px;justify-content:space-between}
.hum .in{width:38px}
.coefs{display:grid;grid-template-columns:207px 22px 30px;padding:4px 0 0 2px;row-gap:2px;line-height:13px;grid-auto-rows:26px}
.coefs label{white-space:nowrap}
.coefs i{font-style:normal;font-size:16px;line-height:18px}
.coefs sub{font-size:9px;line-height:0}
.ecc{margin:0 4px 0 5px;padding:2px 8px 1px}
.ecc legend{margin-left:18px}
.ecc .row{align-items:center;height:21px}
.ecc label{width:137px}
.ecc .in{width:49px;height:19px;margin-right:9px}
.crack{align-items:center;gap:4px;padding:5px 5px;height:27px}
.mtab{margin:0 4px 0 5px;height:222px;padding:1px;justify-content:space-between}
.mtab table{width:230px;height:max-content;margin-left:4px}
.mtab th{height:24px;border-right:1px solid #e4e4e4;padding-left:5px}
.mtab td{height:17px;line-height:16px;background:#dadada;border-right:1px solid #f4f4f4;border-bottom:1px solid #f4f4f4;padding-left:5px}
.mtab td:first-child{padding-left:1px;width:111px}.mtab th:first-child{width:111px}
.t1{height:113px;margin-top:17px}

/* element panel */
.panel{left:4px;top:700px;width:254px;height:471px;padding-top:32px}
.top-fields{padding-left:6px;gap:6px}
.top-fields .frame{width:69px;height:22px;border-top:0;padding:0 12px}
.top-fields .f2,.top-fields .f3{width:79px;padding:0 13px}
.len{margin:2px 4px 0 3px;padding:1px 4px 2px 3px}
.len legend{margin-left:5px}
.len .in{width:232px;height:21px}
.two{gap:12px;padding:4px 0 0 13px}
.two .soft{width:105px;height:21px}
.ke{padding:1px 0 0 18px;align-items:flex-end}
.ke .group{width:69px;margin-right:37px;padding:1px 12px 0}
.ke .group legend{margin-left:-8px}
.ke label{width:69px;margin-bottom:6px}
.ke>.in{width:34px;height:22px;margin-bottom:1px}
.ke .spin{margin:0 0 1px 2px;height:20px}
.tabs{display:flex;gap:1px;padding:8px 3px 0;height:25px}
.tabs button{width:21px;border:1px solid #fff;border-right:2px solid #808080;border-bottom:0;background:#f0f0f0}
.tabs svg{width:16px;height:15px}
.tabs .on{margin-top:-3px;width:23px}
.tabs .sec{font:700 12px "Liberation Serif",serif;color:#353a78}
.page{border:1px solid #fff;border-right-color:#a0a0a0;border-bottom:2px solid #808080;margin-right:1px;height:259px}
.var{align-items:flex-end;padding:5px 0 0 4px;gap:3px}
.var .group{width:78px;height:38px;padding:0 0 0 15px}
.var .group legend{margin-left:-10px}
.var .wide{width:103px;padding-left:6px}
.var .wide legend{margin-left:0}
.var .group .row{gap:3px}
.var .group .in{width:22px;height:19px}
.var .cb{margin:0 5px 9px 2px}
.var>.s16{margin-bottom:9px}
.lbl{display:block;margin-left:1px}
.l1{padding-top:3px}
.lim{padding:2px 0 0 5px;align-items:center}
.lim .in{height:19px}
.lim .in:first-child{width:133px;margin-right:17px}
.lim span{margin-left:5px}
.l2{padding-top:6px}
.faces.dim{grid-template-columns:14px 60px 14px;grid-template-rows:13px 73px 13px;gap:0 12px;width:130px;margin-left:48px;justify-content:start}
.faces.dim svg{width:60px;height:54px;align-self:end;margin-bottom:6px}
.l3{padding-top:2px}
.std{width:220px;height:19px;margin:3px 0 0 5px}
.foot{padding:2px 0 0 114px;gap:56px}
.foot .soft{height:21px;width:31px}
.foot .soft+.soft{width:24px}
.soft.focus,.soft.ok{border-color:#0067c0}

/* fire resistance */
.resist{left:260px;top:877px;width:639px;height:299px;padding-bottom:17px}
.resist .bar{background:#f5f5f5;color:#8a8a8a;height:31px}
.rtools{display:flex;gap:2px;padding:4px 5px 0;height:40px;font:700 14px/20px "Liberation Serif",serif;color:#8a3a18}
.rtools hr{border:0;width:4px}
.rtools .b3{width:24px;height:24px}
.rtools sub{font-size:8px;line-height:0;margin-top:6px}
.rtools .off{color:#c8a498}
.rtools .down{background:#fafafa;border-color:#696969 #fff #fff #696969;box-shadow:none}
.rtools .red{outline:2px solid #f00;outline-offset:-1px}
.iso{display:block;margin:0 17px 0 25px;width:596px;height:209px}

/* reference figure */
.doc{position:absolute;left:890px;top:35px;width:407px;font-family:"Liberation Serif",serif}
.doc-head{text-align:center;font-weight:700;line-height:13px}
.doc figure{margin-top:-26px}
.doc svg{display:block}
.doc figcaption{text-align:center;width:380px;color:#333;margin-top:-1px}

/* nonlinear law */
.law{left:1326px;right:0;top:10px;height:750px;border-right:0}
.law .bar{padding:0 7px 0 8px;height:29px}
.lawgrid{display:grid;grid-template-columns:270px 1fr;grid-template-rows:262px 418px;gap:5px 7px;padding:3px 3px 0 4px}
.treebox,.numbox{display:flex;flex-direction:column}
.tv{display:flex;flex:1;min-height:0;justify-content:space-between;overflow:hidden}
.tree{padding:2px 0 0 13px;flex:1;overflow:hidden;white-space:nowrap}
.tree li{line-height:16px;position:relative;padding-left:11px;border-left:1px dotted #808080}
.tree li::before{content:"";position:absolute;left:0;top:7px;width:8px;border-top:1px dotted #808080}
.tree ul{margin-left:7px}
.tree .cursel{background:#f0f0f0;display:inline-block;padding:0 5px 0 1px;margin-left:-1px}
.tog{display:inline-block;width:9px;height:9px;border:1px solid #8aa0b8;background:#fff;font:9px/7px "DejaVu Sans",sans-serif;text-align:center;color:#2a4a8a}
.tree .tog{position:absolute;left:-5px;top:4px}
.t3{height:172px;margin-top:17px}
.h1t{width:142px;margin:7px 0 0 18px}
.plot{width:100%;height:262px}
.lleft{display:flex;flex-direction:column;gap:4px}
.lp{flex:1;background:linear-gradient(90deg,#fff 134px,#ececec 134px,#ececec 135px,#fff 135px)}
.lp table{width:100%;font-family:"Noto Sans",sans-serif}
.lp td{height:17px;line-height:16px;border-bottom:1px solid #ececec;padding-left:4px}
.lp td:first-child{width:135px}
.gr,.gr td{color:#7a7a7a}
.note{height:53px;border:1px solid #a0a0a0}
.numbox table{width:286px;height:max-content;margin:1px 0 0 4px}
.numbox{color:#b8b8bc}
.numbox th{height:25px;text-align:center;color:#222;background:linear-gradient(#fff,#dfe6ee);border-right:1px solid #b0c4dc;border-bottom:1px solid #b0c4dc}
.numbox td{height:17px;line-height:16px;background:#f5f5f9;text-align:center;border:1px solid #ededf0;border-left:0}
.numbox tr>:first-child{width:56px;text-align:left;padding-left:2px}
.numbox tr>:nth-child(2){width:120px}
.numbox td:last-child{padding-left:46px}.numbox th:last-child{text-align:right}
.t4{height:331px;margin-top:18px}
.h2t{width:218px;margin:7px 0 0 18px}
.lawfoot{padding:5px 4px 0;gap:7px;align-items:flex-start}
.lawfoot .soft{width:73px;height:21px}
.ref{width:187px;height:23px;margin-right:auto;justify-content:flex-start;gap:5px;padding-left:4px;border:1px solid #c8dcf8;border-right:2px solid #8a98b0;border-bottom:2px solid #8a98b0;background:linear-gradient(#c4dcff,#9cb8e4)}

/* section editor */
.editor{position:absolute;left:1048px;right:0;top:581px;bottom:0;display:flex;flex-direction:column;border:1px solid #b0b0b0;border-right:1px solid #8a9ab4;border-radius:8px 8px 0 8px;overflow:hidden;background:#bfdbff;color:#15428b}
.orb{position:absolute;left:2px;top:3px;width:37px;height:37px;z-index:1}
.qat{height:28px;flex:none;background:#fff;display:flex;align-items:center;gap:6px;padding-left:47px}
.qat svg{width:16px;height:16px}
.dn{border:3px solid transparent;border-top:4px solid #4a5a80;border-bottom:0}
.qat .dn{opacity:.6}.qat .big{opacity:1;margin-left:12px}
.mid2{border-width:4px;border-bottom:0;border-top-width:5px}
.rtabs{height:23px;flex:none;display:flex;padding-left:44px;font:11px/22px "Noto Sans",sans-serif}
.rtabs a{color:inherit;text-decoration:none;padding:0 14px;margin-right:4px}
.rtabs .cur{background:linear-gradient(#fff,#e4effd);border:1px solid #8db2e3;border-bottom:0;border-radius:4px 4px 0 0;width:142px;text-align:center;padding:0;white-space:nowrap}
.ribbon{height:82px;flex:none;margin:0 0 2px 2px;border:1px solid #a9c4e8;border-radius:4px;background:linear-gradient(#dbe7f6,#c8d9ee 20%,#d6e6f8);display:flex;flex-direction:column;overflow:hidden;font-family:"Noto Sans",sans-serif}
.rin{display:flex;flex:1;padding:3px 0 0 5px;white-space:nowrap}
.rb{border:0;background:none;flex-direction:column;justify-content:flex-start;gap:2px;width:38px}
.rb svg{flex:none;min-height:32px}
.imp{display:grid;grid-template-columns:24px 24px;gap:5px 10px;align-content:start;margin-left:6px;width:66px}
.imp svg{width:24px;height:24px}
.ribbon hr{border:0;border-left:1px solid #a0bcdc;height:54px}
.ribbon hr+.rb{margin-left:5px;width:50px}
.rb.kon{width:42px}.rb.pol{width:46px}
.rb.cutoff{padding-top:34px;width:22px}
.rlab{background:#c1d8f2;text-align:center;height:15px;line-height:15px;width:450px;color:#3a66a8;padding-right:96px}
.ebar{height:36px;flex:none;display:flex;align-items:center;gap:4px;padding-left:13px;border:1px solid #6a8cc0;border-width:1px 0;background:linear-gradient(90deg,#aac6f0,#c8dcf8 400px);color:#000090}
.ebar>span{width:58px}
.eb{height:32px;width:79px;gap:8px;color:#000;border:1px solid #7a9ccc;background:linear-gradient(#e8f2ff,#a8c4ec)}
.sq{width:32px}
.ebx{display:flex;align-items:center;gap:13px;background:#f4f9ff;padding:0 300px 0 8px;height:32px}
.ebody{flex:1;display:flex;gap:6px;min-height:0}
.props{width:173px;display:flex;flex-direction:column;font-family:"Liberation Sans",sans-serif;color:#000}
.props h3{display:flex;justify-content:space-between;height:19px;line-height:19px;padding:0 5px 0 4px;background:linear-gradient(#dce9fb,#b4cbea);color:#15428b;font-family:"Noto Sans",sans-serif}
.props h3 span{display:flex;gap:10px;align-items:center}
.ptools{display:flex;height:24px;align-items:center;gap:7px;padding-left:4px;background:linear-gradient(#dfebff,#a8c8f4)}
.ptools hr,.tools hr{border:0;border-left:1px solid #7a9ccc;height:14px}
.pt{flex:1;display:flex;justify-content:space-between;background:#fff;overflow:hidden}
.pt table{width:155px;height:max-content}
.pt td{height:17px;line-height:16px;padding-left:4px;border:1px solid #d3e3f3;border-width:0 0 1px 1px}
.pt td:first-child{border-left:0}
.pt tr:first-child td:first-child{background:#d3e3f3}
.ca{width:17px}.cb2{width:70px}.cc{width:68px}
.pt .cat td,.pt .gut{background:#d3e3f3}
.cat td{color:#9ab8d8;font-weight:700}
.sw{display:inline-block;width:14px;height:13px;border:1px solid #000;margin:0 5px 0 -2px;vertical-align:top}
.lt{background:#efefef}.dk{background:#7f7f7f}
.t2{height:212px;margin-top:17px}
.desc{height:53px;margin:4px 1px 1px;padding:4px;border:1px solid #a9c8ec;background:#d3e3f3;line-height:13px}
.desc b{display:block;padding-bottom:2px;font-family:"DejaVu Sans Condensed",sans-serif}
.docarea{flex:1;display:flex;flex-direction:column;min-width:0;padding:0 5px 4px 0}
.dtabs{display:flex;height:24px;align-items:center;justify-content:space-between;background:linear-gradient(#e0edff,#bcd6fb)}
.dtab{display:flex;height:24px;align-items:center;gap:12px;width:252px;padding-left:25px;background:#eaf3ff;border:1px solid #8db2e3;border-width:0 1px 0 0;color:#000;white-space:nowrap;font-family:"Liberation Sans",sans-serif}
.dtab svg:last-child{color:#15428b;flex:none}
.canvas{flex:1;min-height:0;width:100%}
.tools{height:29px;flex:none;display:flex;align-items:center;gap:1px;padding-left:2px;background:linear-gradient(#e6f0ff,#b0cdf8)}
.tools button{width:21px;height:22px;border:0;background:none;flex:none}
.tools button svg{width:18px;height:18px}
.tools .on{border:1px solid #c09858;background:linear-gradient(#ffe0b0,#ffb55a)}
.tools .hl{border:1px solid #0a6cf0;background:#b8d8ff}
.tools hr{margin:0 3px}
.grip{width:3px;height:16px;margin:0 4px 0 1px;background:radial-gradient(#7090c8 1px,transparent 1px) 0 0/3px 4px}
.tools .dn{margin:12px 3px 0}
.blank{width:74px;height:13px;background:#ececec;margin:0 2px}
.status{height:18px;flex:none;display:flex;font:11px/17px "Noto Sans",sans-serif;background:linear-gradient(#cfe2fc,#a4c4f0);border-top:1px solid #5a84c0}
.msg{width:487px;padding-left:4px;white-space:nowrap}
.mode{width:32px;padding-left:4px;color:#7088b0;background:#9fbde8;border-left:1px solid #dbe9fc}
.mode+.cell{margin-left:6px}
.cell{width:84px;margin-right:2px;padding-left:3px;background:#ffffe1}
.c1{color:#009000}.c2{color:#0000c0}.c3{color:#a00000}.cell.c4{color:#0090a0;width:39px;padding-left:2px}
```
